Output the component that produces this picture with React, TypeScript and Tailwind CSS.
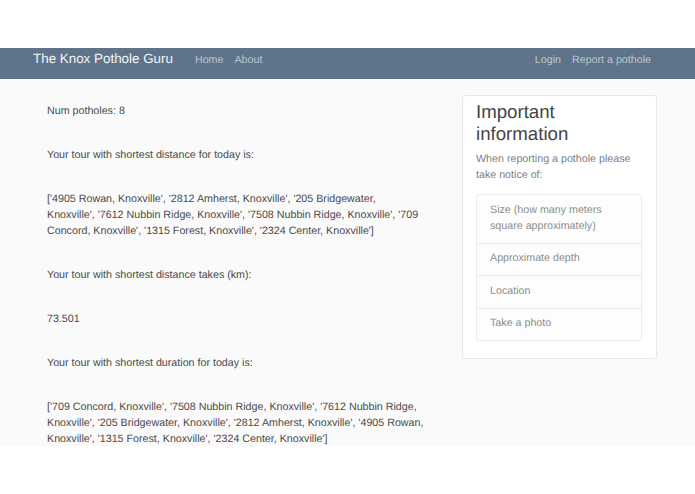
const tourLines = [
  "Num potholes: 8",
  "Your tour with shortest distance for today is:",
  "['4905 Rowan, Knoxville', '2812 Amherst, Knoxville', '205 Bridgewater, Knoxville', '7612 Nubbin Ridge, Knoxville', '7508 Nubbin Ridge, Knoxville', '709 Concord, Knoxville', '1315 Forest, Knoxville', '2324 Center, Knoxville']",
  "Your tour with shortest distance takes (km):",
  "73.501",
  "Your tour with shortest duration for today is:",
  "['709 Concord, Knoxville', '7508 Nubbin Ridge, Knoxville', '7612 Nubbin Ridge, Knoxville', '205 Bridgewater, Knoxville', '2812 Amherst, Knoxville', '4905 Rowan, Knoxville', '1315 Forest, Knoxville', '2324 Center, Knoxville']",
]

const notes = ["Size (how many meters square approximately)", "Approximate depth", "Location", "Take a photo"]

export default function App() {
  return (
    <div className="h-[494px] w-[695px] overflow-hidden bg-white pt-[48px] font-['Liberation_Sans',sans-serif] text-[10.7px] leading-[16px] text-[#4a4a4a] [text-rendering:geometricPrecision]">
      <nav className="flex h-[31px] items-start bg-[#5f748a] pl-[33px] pr-[44px] shadow-[0_1px_1px_rgba(0,0,0,0.1)]">
        <span className="mt-[1px] text-[13.4px] leading-[20px] text-[#f2f4f6]">The Knox Pothole Guru</span>
        <a className="ml-[22px] mt-[4px] text-[#bcc5cf]">Home</a>
        <a className="ml-[11px] mt-[4px] text-[#bcc5cf]">About</a>
        <a className="ml-auto mt-[4px] text-[#bcc5cf]">Login</a>
        <a className="ml-[11px] mt-[4px] text-[#bcc5cf]">Report a pothole</a>
      </nav>
      <div className="flex h-[367px] items-start overflow-hidden bg-[#fafafa] pl-[47px] pr-[38px] pt-[16px]">
        <main className="flex w-[378px] flex-col gap-[28px] pt-[8px]">
          {tourLines.map((line) => (
            <p key={line}>{line}</p>
          ))}
        </main>
        <aside className="ml-auto w-[195px] rounded-[3px] border border-[#e8e8e8] bg-white pb-[17px] pl-[13px] pr-[14px] pt-[5px]">
          <h2 className="text-[18.67px] leading-[22px] text-[#444]">Important information</h2>
          <p className="mt-[6px] text-[#7a7f85]">When reporting a pothole please take notice of:</p>
          <ul className="mt-[11px] rounded-[3px] border border-[#ececec] bg-[#fdfdfd] text-[#8d8d8d]">
            {notes.map((note, i) => (
              <li key={note} className={`px-[13px] pt-[6.5px] pb-[9px] ${i > 0 ? "border-t border-[#ececec]" : ""}`}>
                {note}
              </li>
            ))}
          </ul>
        </aside>
      </div>
    </div>
  )
}
